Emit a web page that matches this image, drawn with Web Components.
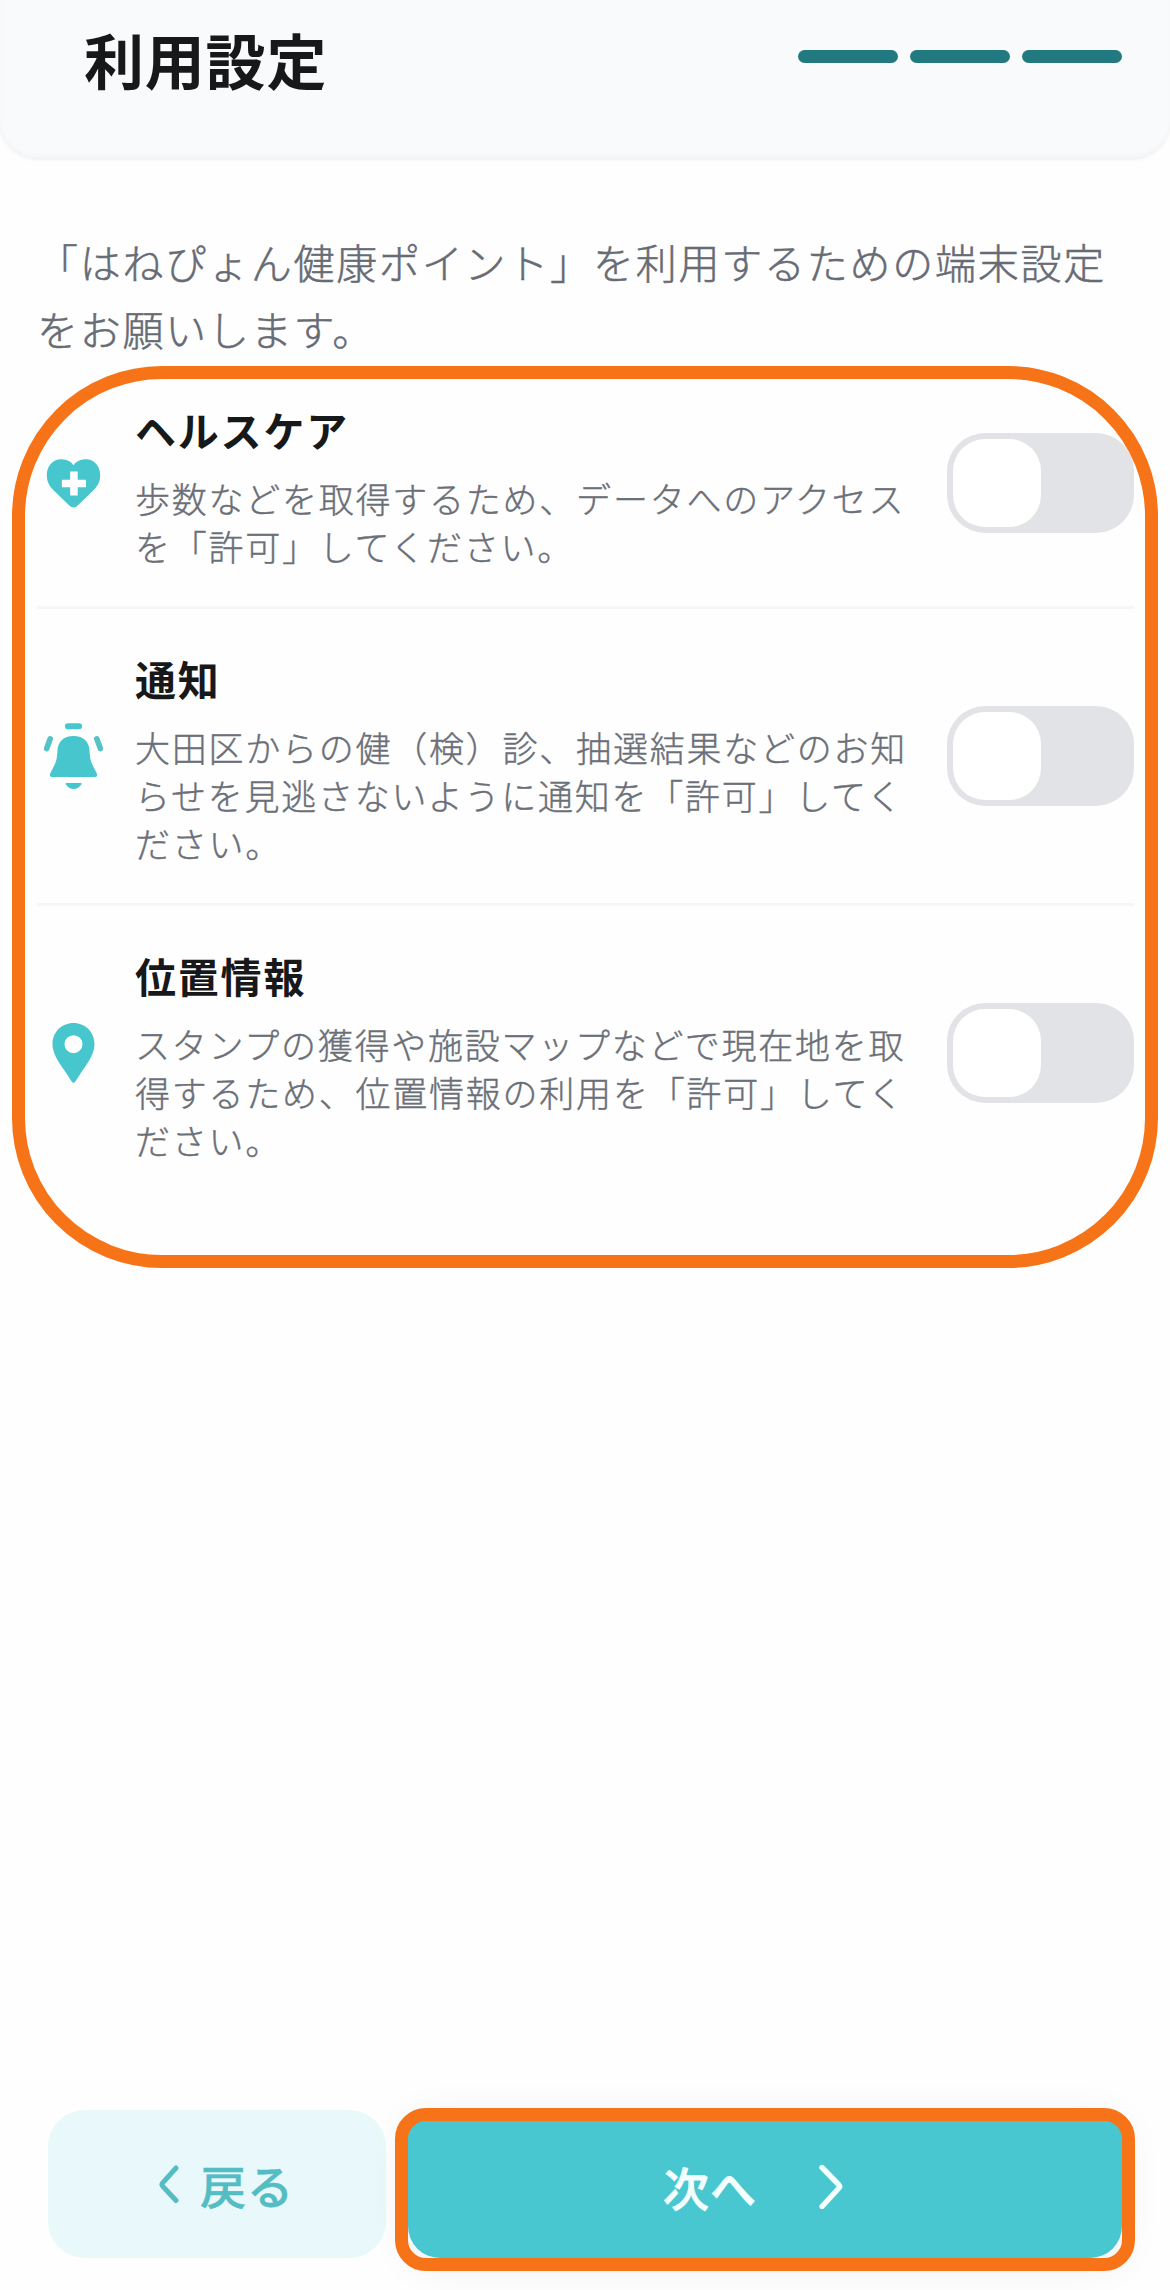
<!DOCTYPE html>
<html lang="ja">
<head>
<meta charset="utf-8">
<title>利用設定</title>
<style>
  body {
    margin: 0;
    background: #fefefe;
    color: #17181a;
    font-family: "Noto Sans CJK JP", sans-serif;
  }
</style>
</head>
<body>
<settings-page>
  <page-header slot="header" steps="3">利用設定</page-header>
  <span slot="lead">「はねぴょん健康ポイント」を利用するための端末設定<br>をお願いします。</span>
  <highlight-frame class="list">
    <setting-row icon="heart">
      <span slot="title">ヘルスケア</span>
      歩数などを取得するため、データへのアクセス<br>を「許可」してください。
    </setting-row>
    <setting-row icon="bell">
      <span slot="title">通知</span>
      大田区からの健（検）診、抽選結果などのお知<br>らせを見逃さないように通知を「許可」してく<br>ださい。
    </setting-row>
    <setting-row icon="pin">
      <span slot="title">位置情報</span>
      スタンプの獲得や施設マップなどで現在地を取<br>得するため、位置情報の利用を「許可」してく<br>ださい。
    </setting-row>
  </highlight-frame>
  <nav-button slot="footer" type="back">戻る</nav-button>
  <nav-button slot="footer" type="next">次へ</nav-button>
</settings-page>

<template id="page">
  <style>
    :host {
      display: flex;
      flex-direction: column;
      height: 2290px;
      box-sizing: border-box;
      overflow: hidden;
    }
    .lead {
      margin: 0;
      padding: 70px 0 4px 37px;
      font-size: 41px;
      font-weight: 300;
      letter-spacing: 1.76px;
      line-height: 67px;
      white-space: nowrap;
      color: #676b74;
      -webkit-text-stroke: .5px currentColor;
    }
    .footer {
      display: flex;
      gap: 22px;
      margin-top: auto;
      padding: 0 48px 32px;
    }
  </style>
  <slot name="header"></slot>
  <p class="lead"><slot name="lead"></slot></p>
  <slot></slot>
  <div class="footer"><slot name="footer"></slot></div>
</template>

<template id="header">
  <style>
    :host {
      display: flex;
      justify-content: space-between;
      align-items: flex-start;
      height: 158px;
      box-sizing: border-box;
      padding: 0 48px 0 84px;
      background: #f9fafc;
      border-radius: 0 0 38px 38px;
      box-shadow: 0 1px 5px rgba(0,0,0,.08), inset 0 -3px 4px rgba(0,0,0,.015);
    }
    h1 {
      margin: 0;
      padding-top: 14px;
      font-size: 60px;
      font-weight: 700;
      line-height: 90px;
      letter-spacing: .8px;
    }
    .steps {
      display: flex;
      gap: 12px;
      padding-top: 50px;
    }
    .step {
      width: 100px;
      height: 13px;
      border-radius: 7px;
      background: #227a80;
    }
  </style>
  <h1><slot></slot></h1>
  <div class="steps"></div>
</template>

<template id="frame">
  <style>
    :host {
      display: block;
      position: relative;
      height: 902px;
      margin: 0 12px;
      padding: 0 24px 0 25px;
      box-sizing: border-box;
    }
    /* オレンジの枠は中身の上に重ねる */
    .line {
      position: absolute;
      inset: 0;
      border: 13.5px solid #f77318;
      border-radius: 150px;
      pointer-events: none;
    }
  </style>
  <slot></slot>
  <div class="line"></div>
</template>

<template id="row">
  <style>
    :host {
      display: flex;
      align-items: center;
      padding: 34px 0;
      border-bottom: 3px solid #f5f6f7;
    }
    :host(:first-of-type) { padding-top: 28px; }
    :host(:last-of-type) { border-bottom: 0; }
    .icon {
      flex: none;
      width: 73px;
      height: 73px;
      margin-right: 25px;
      fill: #48c6ce;
    }
    .text {
      flex: 1;
      margin: -2px 0 2px;
      white-space: nowrap;
    }
    .title {
      margin-bottom: 7px;
      font-size: 41px;
      font-weight: 700;
      letter-spacing: 1.8px;
      line-height: 75px;
    }
    .desc {
      font-size: 35px;
      font-weight: 300;
      letter-spacing: 1.76px;
      line-height: 48px;
      color: #6b6f78;
      -webkit-text-stroke: .4px currentColor;
    }
  </style>
  <svg class="icon" viewBox="0 0 73 73"></svg>
  <div class="text">
    <div class="title"><slot name="title"></slot></div>
    <div class="desc"><slot></slot></div>
  </div>
  <toggle-switch></toggle-switch>
</template>

<template id="switch">
  <style>
    :host {
      display: block;
      flex: none;
      width: 187px;
      height: 100px;
      padding: 6px;
      box-sizing: border-box;
      border-radius: 38px;
      background: #e2e3e7;
    }
    .knob {
      width: 88px;
      height: 88px;
      border-radius: 32px;
      background: #fff;
    }
  </style>
  <div class="knob"></div>
</template>

<template id="button">
  <style>
    :host {
      display: flex;
      position: relative;
      align-items: center;
      height: 148px;
      box-sizing: border-box;
      border-radius: 37px;
      font-size: 46px;
      font-weight: 500;
      line-height: 70px;
      letter-spacing: 1px;
    }
    svg {
      fill: none;
      stroke: currentColor;
      stroke-linecap: round;
      stroke-linejoin: round;
    }
    :host([type="back"]) {
      width: 338px;
      padding-left: 110px;
      color: #54bdc3;
      background: #e9f8fb;
      box-shadow: inset 0 0 12px #e9fbf8;
      -webkit-text-stroke: .5px currentColor;
    }
    :host([type="next"]) {
      width: 714px;
      padding: 3px 0 0 255px;
      color: #f4ffff;
      background: #48c7d0;
      border-radius: 24px 24px 32px 32px;
      box-shadow: 0 8px 40px rgba(40,40,90,.08);
      -webkit-text-stroke: .8px currentColor;
    }
    .line { display: none; }
    :host([type="next"]) .line {
      display: block;
      position: absolute;
      inset: -2px -13px -13px;
      border: 13.5px solid #f77318;
      border-radius: 31px;
    }
    :host([type="back"]) .next,
    :host([type="next"]) .back { display: none; }
    .back { margin-right: 20px; }
    .next { margin-left: 61px; }
  </style>
  <svg class="back" width="22" height="40" viewBox="0 0 22 40" stroke-width="5"><path d="M18 4 4.700 18.800q-1.500 1.700 0 3.400L18 36.500"/></svg>
  <slot></slot>
  <svg class="next" width="26" height="46" viewBox="0 0 26 46" stroke-width="5.400"><path d="M4 4.500 21 22q1.300 1.500 0 3L4 43.500"/></svg>
  <div class="line"></div>
</template>

<script>
  (function () {
    const ICONS = {
      heart: `
        <path d="M36.5 18.2C32.5 12.8 27.5 12.3 24 12.3 15.500 12.300 9.800 19.500 9.800 28c0 7.500 3 11.500 7 15.500L32.300 58.500q4.200 3.800 8.400 0L56.200 43.500c4-4 7-8 7-15.500C63.200 19.500 57.500 12.300 49 12.300c-3.500 0-8.500.5-12.500 5.900Z"/>
        <path fill="#fff" d="M33.200 24.500h7.500v8.300H49v7.400h-8.300v8.300h-7.500v-8.300h-8.300v-7.400h8.300Z"/>`,
      bell: `
        <rect x="28" y="3.200" width="17" height="6" rx="2.800"/>
        <path d="M36.500 16C26.500 16 21 22 20.500 30 20.200 37 19.500 41 17.500 45L13.200 53.500Q11.800 57 15.500 57H57.500Q61.200 57 59.800 53.500L55.500 45C53.500 41 52.800 37 52.500 30 52 22 46.500 16 36.500 16Z"/>
        <path d="M29.500 63h14.200q2 0 .5 1.800-3 4.200-7.600 4.200t-7.600-4.200q-1.500-1.800.5-1.800Z"/>
        <path fill="none" stroke="#55c2c5" stroke-width="5.600" stroke-linecap="round" d="M13.200 18.800 9.700 28.500M59.800 18.800 63.400 28.500"/>`,
      pin: `
        <path fill-rule="evenodd" d="M36.500 6C24.500 6 15.500 15.300 15.500 27c0 9 5.500 17.500 12 26.500l7 10.800q2 3 4 0l7-10.800c6.500-9 12-17.500 12-26.500C57.500 15.300 48.500 6 36.500 6Zm0 12.200a9 9 0 1 1 0 18 9 9 0 0 1 0-18Z"/>`
    }

    class BaseElement extends HTMLElement {
      constructor() {
        super()
        const template = document.querySelector('#' + this.constructor.templateId)
        this.attachShadow({ mode: 'open' })
        this.shadowRoot.appendChild(template.content.cloneNode(true))
      }
    }

    class SettingsPage extends BaseElement {
      static get templateId() { return 'page' }
    }

    class PageHeader extends BaseElement {
      static get templateId() { return 'header' }
      connectedCallback() {
        const count = Number(this.getAttribute('steps'))
        this.shadowRoot.querySelector('.steps').innerHTML = '<div class="step"></div>'.repeat(count)
      }
    }

    class HighlightFrame extends BaseElement {
      static get templateId() { return 'frame' }
    }

    class SettingRow extends BaseElement {
      static get templateId() { return 'row' }
      connectedCallback() {
        this.shadowRoot.querySelector('.icon').innerHTML = ICONS[this.getAttribute('icon')]
      }
    }

    class ToggleSwitch extends BaseElement {
      static get templateId() { return 'switch' }
      connectedCallback() {
        this.knob$ = this.shadowRoot.querySelector('.knob')
        this.addEventListener('click', () => {
          const on = this.toggleAttribute('checked')
          this.knob$.style.marginLeft = on ? '87px' : '0'
          this.style.background = on ? '#48c7d0' : ''
        })
      }
    }

    class NavButton extends BaseElement {
      static get templateId() { return 'button' }
    }

    customElements.define('toggle-switch', ToggleSwitch)
    customElements.define('setting-row', SettingRow)
    customElements.define('highlight-frame', HighlightFrame)
    customElements.define('page-header', PageHeader)
    customElements.define('nav-button', NavButton)
    customElements.define('settings-page', SettingsPage)
  })()
</script>
</body>
</html>
